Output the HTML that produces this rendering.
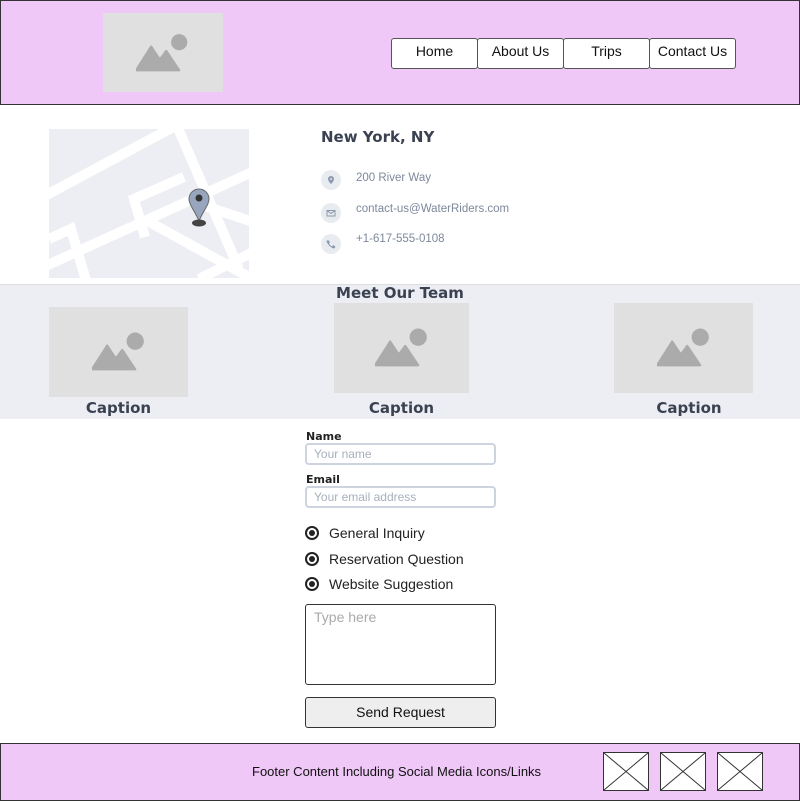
<!DOCTYPE html>
<html><head><meta charset="utf-8"><style>
*{margin:0;padding:0;box-sizing:border-box}
body{width:800px;height:800px;position:relative;background:#fff;font-family:"Liberation Sans",sans-serif;overflow:hidden}
.a{position:absolute}
.ph{position:absolute;background:#e0e0e0}
.ph svg{position:absolute;left:50%;top:50%;transform:translate(-50%,-50%)}
.nav{position:absolute;top:38px;height:31px;width:87px;background:#fff;border:1px solid #555;border-radius:3px;font-size:14px;text-align:center;line-height:24px;color:#111}
.os{font-family:"DejaVu Sans","Liberation Sans",sans-serif}
.ic{position:absolute;left:321px;width:20px;height:20px;border-radius:50%;background:#e8ebf0}
.ic svg{position:absolute;left:5px;top:5px}
.ct{position:absolute;left:356px;font-size:11.5px;color:#7d889c}
.cap{position:absolute;font-size:15px;font-weight:bold;color:#3a4252;text-align:center}
.inp{position:absolute;left:305px;width:191px;height:22px;border:2px solid #cdd4df;border-radius:4px;font-size:12px;color:#a7b0be;padding-left:7px;line-height:18px}
.lbl{position:absolute;left:306px;font-size:11px;font-weight:bold;color:#222}
.rad{position:absolute;left:305px;width:14px;height:14px;border:2px solid #222;border-radius:50%}
.rad::after{content:"";position:absolute;left:2px;top:2px;width:6px;height:6px;border-radius:50%;background:#222}
.rt{position:absolute;left:329px;font-size:14px;color:#222}
.x{position:absolute;top:752px;width:46px;height:39px;background:#fff;border:1px solid #333}
</style></head><body>
<div class="a" style="left:0;top:0;width:800px;height:105px;background:#f0c8f8;border:1px solid #333"></div>
<div class="ph" style="left:103px;top:13px;width:120px;height:79px"><svg width="54" height="40" viewBox="0 0 50 36"><circle cx="40" cy="8" r="7.5" fill="#ababab"/><path d="M0 34 L14 12 L22 24 L28 16 L40 34 Z" fill="#ababab" stroke="#ababab" stroke-width="2" stroke-linejoin="round"/></svg></div>
<div class="nav" style="left:391px">Home</div>
<div class="nav" style="left:477px">About Us</div>
<div class="nav" style="left:563px">Trips</div>
<div class="nav" style="left:649px">Contact Us</div>

<div class="a" style="left:49px;top:129px;width:200px;height:149px;background:#eceef3;overflow:hidden">
<svg width="200" height="149" viewBox="0 0 200 149"><g stroke="#fff" stroke-width="10" fill="none">
<path d="M-10 70 L130 -5"/><path d="M125 -10 L190 140"/><path d="M-10 140 L210 40"/><path d="M141 72 L210 95"/><path d="M95 90 L200 148"/><path d="M0 110 L22 100 L38 155"/><path d="M96 108 L85 70 L135 48"/><path d="M150 150 L210 120"/></g>
<path d="M150 60 a10 10 0 0 1 10 10 c0 6 -6 12 -10 22 c-4 -10 -10 -16 -10 -22 a10 10 0 0 1 10 -10z" fill="#98a6bd" stroke="#666" stroke-width="1"/><circle cx="150" cy="69" r="3.5" fill="#333"/><ellipse cx="150" cy="94" rx="7" ry="3.5" fill="#444"/></svg></div>
<div class="a os" style="left:321px;top:128px;font-size:15px;font-weight:bold;color:#3a4252">New York, NY</div>
<div class="ic" style="top:170px"><svg width="10" height="10" viewBox="0 0 10 10"><path d="M5 1a3 3 0 0 1 3 3c0 2-3 5-3 5s-3-3-3-5a3 3 0 0 1 3-3z" fill="#8c98ad"/><circle cx="5" cy="4" r="1" fill="#e8ebf0"/></svg></div><div class="ct" style="top:172px">200 River Way</div>
<div class="ic" style="top:203px"><svg width="10" height="10" viewBox="0 0 10 10"><rect x="1" y="2.5" width="8" height="5.5" fill="none" stroke="#8c98ad" stroke-width="1"/><path d="M1 2.5l4 3 4-3" fill="none" stroke="#8c98ad" stroke-width="1"/></svg></div><div class="ct" style="top:203px">contact-us@WaterRiders.com</div>
<div class="ic" style="top:234px"><svg width="10" height="10" viewBox="0 0 10 10"><path d="M2 1l2 2-1 1.5c.8 1.5 1.7 2.4 3 3L7.5 6l2 2-1.5 1.5C5 9 1 5 0.5 2z" fill="#8c98ad"/></svg></div><div class="ct" style="top:233px">+1-617-555-0108</div>

<div class="a" style="left:0;top:284px;width:800px;height:135px;background:#eceef3;border-top:1px solid #ddd"></div>
<div class="a os" style="left:0;width:800px;top:284px;text-align:center;font-size:15px;font-weight:bold;color:#3a4252">Meet Our Team</div>
<div class="ph" style="left:49px;top:307px;width:139px;height:90px"><svg width="54" height="40" viewBox="0 0 50 36"><circle cx="40" cy="8" r="8" fill="#ababab"/><path d="M0 34 L14 12 L22 24 L28 16 L40 34 Z" fill="#ababab" stroke="#ababab" stroke-width="2" stroke-linejoin="round"/></svg></div>
<div class="ph" style="left:334px;top:303px;width:135px;height:90px"><svg width="54" height="40" viewBox="0 0 50 36"><circle cx="40" cy="8" r="8" fill="#ababab"/><path d="M0 34 L14 12 L22 24 L28 16 L40 34 Z" fill="#ababab" stroke="#ababab" stroke-width="2" stroke-linejoin="round"/></svg></div>
<div class="ph" style="left:614px;top:303px;width:139px;height:90px"><svg width="54" height="40" viewBox="0 0 50 36"><circle cx="40" cy="8" r="8" fill="#ababab"/><path d="M0 34 L14 12 L22 24 L28 16 L40 34 Z" fill="#ababab" stroke="#ababab" stroke-width="2" stroke-linejoin="round"/></svg></div>
<div class="cap os" style="left:49px;width:139px;top:399px">Caption</div>
<div class="cap os" style="left:334px;width:135px;top:399px">Caption</div>
<div class="cap os" style="left:614px;width:150px;top:399px">Caption</div>

<div class="lbl os" style="top:430px">Name</div>
<div class="inp" style="top:443px">Your name</div>
<div class="lbl os" style="top:473px">Email</div>
<div class="inp" style="top:486px">Your email address</div>
<div class="rad" style="top:526px"></div><div class="rt" style="top:525px">General Inquiry</div>
<div class="rad" style="top:552px"></div><div class="rt" style="top:551px">Reservation Question</div>
<div class="rad" style="top:577px"></div><div class="rt" style="top:576px">Website Suggestion</div>
<div class="a" style="left:305px;top:604px;width:191px;height:81px;border:1px solid #333;border-radius:3px;font-size:14px;color:#aaa;padding:4px 8px">Type here</div>
<div class="a" style="left:305px;top:697px;width:191px;height:31px;border:1px solid #333;border-radius:3px;background:#eee;font-size:14px;text-align:center;line-height:29px;color:#111">Send Request</div>

<div class="a" style="left:0;top:743px;width:800px;height:58px;background:#f0c8f8;border:1px solid #333"></div>
<div class="a" style="left:252px;top:764px;font-size:13px;color:#111">Footer Content Including Social Media Icons/Links</div>
<div class="x" style="left:603px"><svg width="44" height="37"><path d="M0 0L44 37M44 0L0 37" stroke="#333"/></svg></div>
<div class="x" style="left:660px"><svg width="44" height="37"><path d="M0 0L44 37M44 0L0 37" stroke="#333"/></svg></div>
<div class="x" style="left:717px"><svg width="44" height="37"><path d="M0 0L44 37M44 0L0 37" stroke="#333"/></svg></div>
</body></html>
